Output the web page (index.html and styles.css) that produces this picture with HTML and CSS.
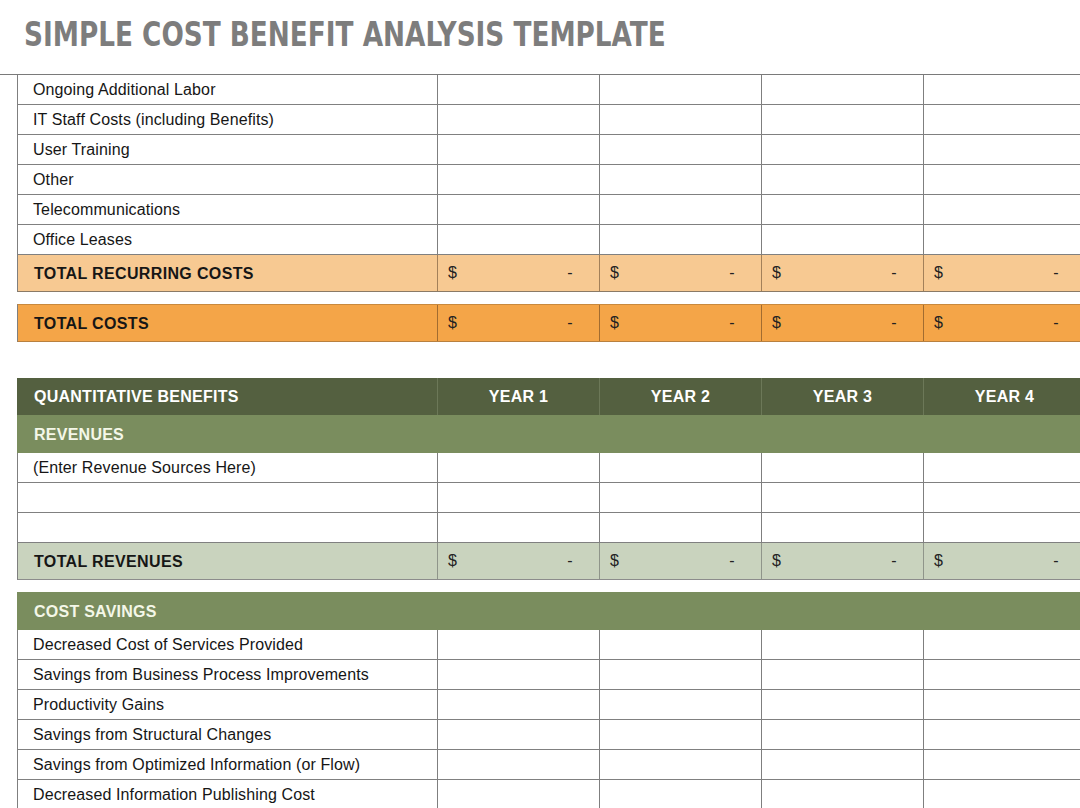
FILE: index.html
```html
<!DOCTYPE html>
<html lang="en">
<head>
<meta charset="utf-8">
<title>Simple Cost Benefit Analysis Template</title>
<link rel="stylesheet" href="styles.css">
</head>
<body>
<header class="title-bar">
  <h1 class="title">SIMPLE COST BENEFIT ANALYSIS TEMPLATE</h1>
</header>
<main class="sheet">
  <section class="block">
    <div class="row item"><div class="cell label">Ongoing Additional Labor</div><div class="cell"></div><div class="cell"></div><div class="cell"></div><div class="cell"></div></div>
    <div class="row item"><div class="cell label">IT Staff Costs (including Benefits)</div><div class="cell"></div><div class="cell"></div><div class="cell"></div><div class="cell"></div></div>
    <div class="row item"><div class="cell label">User Training</div><div class="cell"></div><div class="cell"></div><div class="cell"></div><div class="cell"></div></div>
    <div class="row item"><div class="cell label">Other</div><div class="cell"></div><div class="cell"></div><div class="cell"></div><div class="cell"></div></div>
    <div class="row item"><div class="cell label">Telecommunications</div><div class="cell"></div><div class="cell"></div><div class="cell"></div><div class="cell"></div></div>
    <div class="row item"><div class="cell label">Office Leases</div><div class="cell"></div><div class="cell"></div><div class="cell"></div><div class="cell"></div></div>
    <div class="row total recurring">
      <div class="cell label">TOTAL RECURRING COSTS</div>
      <div class="cell money"><span>$</span><span>-</span></div>
      <div class="cell money"><span>$</span><span>-</span></div>
      <div class="cell money"><span>$</span><span>-</span></div>
      <div class="cell money"><span>$</span><span>-</span></div>
    </div>
  </section>

  <section class="block gap-sm">
    <div class="row total grand">
      <div class="cell label">TOTAL COSTS</div>
      <div class="cell money"><span>$</span><span>-</span></div>
      <div class="cell money"><span>$</span><span>-</span></div>
      <div class="cell money"><span>$</span><span>-</span></div>
      <div class="cell money"><span>$</span><span>-</span></div>
    </div>
  </section>

  <section class="block gap-lg">
    <div class="row head">
      <div class="cell label">QUANTITATIVE BENEFITS</div>
      <div class="cell year">YEAR 1</div>
      <div class="cell year">YEAR 2</div>
      <div class="cell year">YEAR 3</div>
      <div class="cell year">YEAR 4</div>
    </div>
    <div class="row band"><div class="cell label">REVENUES</div></div>
    <div class="row item"><div class="cell label">(Enter Revenue Sources Here)</div><div class="cell"></div><div class="cell"></div><div class="cell"></div><div class="cell"></div></div>
    <div class="row item"><div class="cell label"></div><div class="cell"></div><div class="cell"></div><div class="cell"></div><div class="cell"></div></div>
    <div class="row item"><div class="cell label"></div><div class="cell"></div><div class="cell"></div><div class="cell"></div><div class="cell"></div></div>
    <div class="row total revenue">
      <div class="cell label">TOTAL REVENUES</div>
      <div class="cell money"><span>$</span><span>-</span></div>
      <div class="cell money"><span>$</span><span>-</span></div>
      <div class="cell money"><span>$</span><span>-</span></div>
      <div class="cell money"><span>$</span><span>-</span></div>
    </div>
  </section>

  <section class="block gap-sm">
    <div class="row band"><div class="cell label">COST SAVINGS</div></div>
    <div class="row item"><div class="cell label">Decreased Cost of Services Provided</div><div class="cell"></div><div class="cell"></div><div class="cell"></div><div class="cell"></div></div>
    <div class="row item"><div class="cell label">Savings from Business Process Improvements</div><div class="cell"></div><div class="cell"></div><div class="cell"></div><div class="cell"></div></div>
    <div class="row item"><div class="cell label">Productivity Gains</div><div class="cell"></div><div class="cell"></div><div class="cell"></div><div class="cell"></div></div>
    <div class="row item"><div class="cell label">Savings from Structural Changes</div><div class="cell"></div><div class="cell"></div><div class="cell"></div><div class="cell"></div></div>
    <div class="row item"><div class="cell label">Savings from Optimized Information (or Flow)</div><div class="cell"></div><div class="cell"></div><div class="cell"></div><div class="cell"></div></div>
    <div class="row item"><div class="cell label">Decreased Information Publishing Cost</div><div class="cell"></div><div class="cell"></div><div class="cell"></div><div class="cell"></div></div>
  </section>
</main>
</body>
</html>
```

FILE: styles.css
```css
html, body {
  margin: 0;
  padding: 0;
  background: #ffffff;
  overflow: hidden;
}

body {
  width: 1080px;
  height: 808px;
  font-family: "Liberation Sans", Arial, sans-serif;
  font-size: 16px;
  letter-spacing: 0.12px;
  color: #161616;
}

.title-bar {
  height: 74px;
  box-sizing: content-box;
  padding-left: 24px;
  border-bottom: 1px solid #7a7a7a;
}

.title {
  display: inline-block;
  margin: 0;
  padding: 17px 0 0 0;
  font-family: "DejaVu Sans Condensed", "Liberation Sans", sans-serif;
  font-weight: bold;
  font-size: 34px;
  line-height: 34px;
  color: #7d7d7d;
  letter-spacing: 0;
  white-space: nowrap;
  transform: scaleX(0.86);
  transform-origin: 0 0;
}

.sheet {
  margin-left: 17px;
  width: 1069px;
}

.gap-sm {
  margin-top: 12px;
}

.gap-lg {
  margin-top: 36px;
}

.row {
  display: grid;
  grid-template-columns: 420px repeat(4, 162px);
  box-sizing: border-box;
  border-left: 1px solid #7f7f7f;
}

.cell {
  box-sizing: border-box;
  display: flex;
  align-items: center;
  border-right: 1px solid #7f7f7f;
  min-width: 0;
}

.label {
  padding-left: 15px;
  padding-top: 1px;
  white-space: nowrap;
}

/* plain entry rows */
.item {
  height: 30px;
  border-bottom: 1px solid #808080;
}

/* total rows */
.total {
  height: 37px;
  border-bottom: 1px solid #8a7a66;
  font-weight: bold;
  letter-spacing: 0.35px;
}

.total .label {
  padding-left: 16px;
}

.total .cell {
  border-right-color: rgba(60, 40, 20, 0.45);
}

.recurring {
  background: #f7c992;
}

.grand {
  height: 38px;
  background: #f4a548;
  border-top: 1px solid #c9893d;
  border-bottom-color: #b8803f;
}

.revenue {
  background: #c9d3be;
  border-bottom-color: #8c8c8c;
}

.revenue .cell {
  border-right-color: #8f958a;
}

.money {
  justify-content: space-between;
  padding: 0 26px 0 10px;
  font-weight: normal;
  color: #222;
}

/* green header rows */
.head {
  height: 37px;
  background: #546040;
  border-left-color: #546040;
  color: #ffffff;
  font-weight: bold;
  letter-spacing: 0.25px;
}

.head .cell {
  border-right-color: #6c7858;
}

.head .label {
  padding-left: 16px;
}

.year {
  justify-content: center;
}

.band {
  display: flex;
  height: 38px;
  background: #7a8d5e;
  border-left-color: #7a8d5e;
  color: #f4f7e8;
  font-weight: bold;
  letter-spacing: 0.25px;
}

.band .cell {
  border-right: none;
}

.band .label {
  padding-left: 16px;
}
```
